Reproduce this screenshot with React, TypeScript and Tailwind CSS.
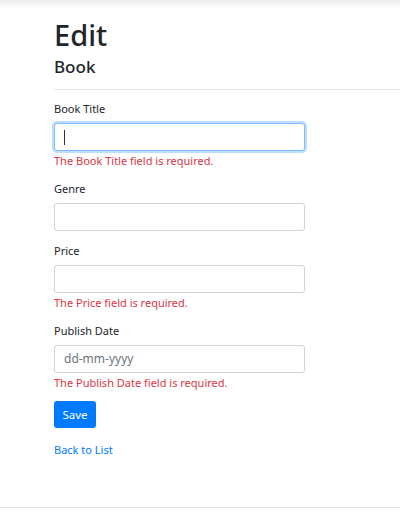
import React from "react";

function Field({ label, error, placeholder, focused }: { label: string; error?: string; placeholder?: string; focused?: boolean }) {
  return (
    <div className="flex flex-col">
      <label className="text-[11px] leading-[16px] text-[#212529]">{label}</label>
      <div
        className={
          "mt-[6px] h-[28px] w-[251px] rounded-[3px] border bg-white px-[9px] flex items-center text-[12px] " +
          (focused
            ? "border-[#80bdff] shadow-[0_0_0_2px_rgba(0,123,255,0.25)]"
            : "border-[#ced4da]")
        }
      >
        {focused ? <span className="inline-block h-[15px] w-px bg-[#333]" /> : null}
        {placeholder ? <span className="text-[#6c757d]">{placeholder}</span> : null}
      </div>
      {error ? (
        <div className="mt-[2px] text-[11px] leading-[16px] text-[#dc3545]">{error}</div>
      ) : null}
    </div>
  );
}

export default function App() {
  return (
    <div className="relative h-[516px] w-[400px] bg-white overflow-hidden" style={{ fontFamily: '"Noto Sans", "Open Sans", sans-serif' }}>
      <div className="h-[9px] bg-gradient-to-b from-[#ececec] to-white" />
      <div className="pl-[54px]">
        <h1 className="mt-[8px] text-[29px] leading-[36px] font-medium text-[#212529]">Edit</h1>
        <h4 className="mt-[4px] text-[17px] leading-[20px] font-medium text-[#212529]">Book</h4>
        <hr className="mt-[12px] border-t border-[#e9e9e9]" />
        <div className="mt-[11px] flex flex-col gap-[12px]">
          <Field label="Book Title" error="The Book Title field is required." focused />
          <Field label="Genre" />
          <Field label="Price" error="The Price field is required." />
          <Field label="Publish Date" placeholder="dd-mm-yyyy" error="The Publish Date field is required." />
        </div>
        <button className="mt-[10px] h-[27px] w-[42px] rounded-[3px] bg-[#007bff] text-[11.5px] text-white">Save</button>
        <div className="mt-[14px] text-[11px] leading-[16px] text-[#007bff]">Back to List</div>
      </div>
      <div className="absolute left-0 right-0 top-[507px] border-t border-[#e5e5e5]" />
    </div>
  );
}
